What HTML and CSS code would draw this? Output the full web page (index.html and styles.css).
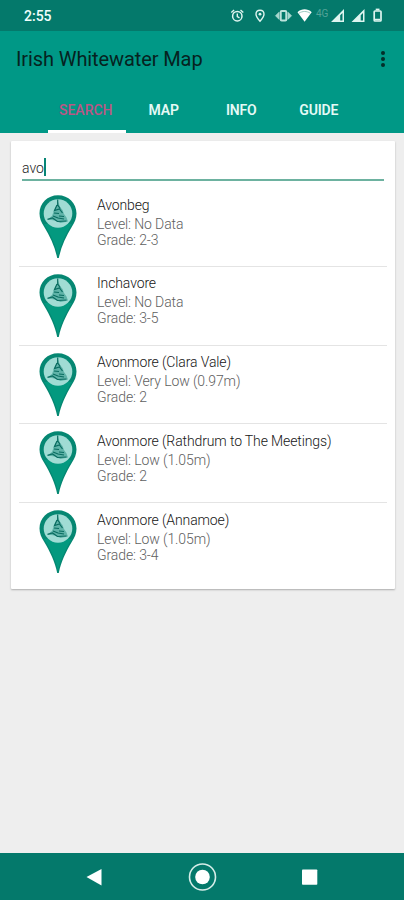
FILE: index.html
```
<!DOCTYPE html>
<html lang="en">
<head>
<meta charset="utf-8">
<title>Irish Whitewater Map</title>
<link rel="stylesheet" href="styles.css">
</head>
<body>
<svg class="defs" aria-hidden="true">
  <symbol id="pin" viewBox="0 0 38 64">
    <path d="M19 .3C8.500.3.5 8.300.5 18.600c0 5 2 9 4.500 13C11 41.500 16 52 18.200 63h1.600C22 52 27 41.500 33 31.600c2.500-4 4.500-8 4.500-13C37.500 8.300 29.500.3 19 .3z" fill="#058772"/>
    <path d="M5 29C12 40 17 51 19 61 21 51 26 40 33 29z" fill="#03997f"/>
    <circle cx="19" cy="18.500" r="14.300" fill="#a0dcd4"/>
    <path d="M18.500 5l-.5 5-2.500 4-2.500 7-4.500 3.500 7 1 6 2.500 7.500-1.500-1.500-4-2.500-3.500-1.500-4-2.500-3z" fill="#5fb3a8"/>
    <path d="M18.700 4.500v5.500l2.500 3.500M18 10l-2.500 5.500 5-1.500 3 4M15 18l5 .5M20 21l5 .5M8.500 24.300l5-1.300 5 3.500 9-.5M14 21l5 2 6 1" fill="none" stroke="#096c60" stroke-width="1.200"/>
  </symbol>
</svg>
<header>
  <div class="status">
    <span class="clock">2:55</span>
    <svg class="status-icons" width="170" height="31" viewBox="0 0 170 31" fill="none" stroke="#dff5f0">
      <circle cx="12.300" cy="16.200" r="4.700" stroke-width="1.500"/><path d="M12.300 13.500v3l2.200 1.300M6.300 12.500l2.800-2.500M15.500 10l2.800 2.500" stroke-width="1.400"/>
      <path d="M35 10.200c-2.400 0-4 1.700-4 4 0 2.700 4 7 4 7s4-4.300 4-7c0-2.300-1.600-4-4-4z" stroke-width="1.400"/><circle cx="35" cy="14.200" r="1.400" fill="#dff5f0" stroke="none"/>
      <rect x="55.700" y="11" width="5.600" height="9.500" rx="1" stroke="#bce3dc" stroke-width="2"/><path d="M54 12.300v7l-3.500-3.500zM63 12.300v7l3.500-3.500z" fill="#a8d8cf" stroke="#a8d8cf" stroke-width=".8"/>
      <path d="M72.500 12.200c4.200-3.800 10-3.800 14.200 0l-7.100 9.600z" fill="#fff" stroke="none"/><path d="M74 13.200c3.500-2.300 7.700-2.300 11.200 0" stroke="#84bdb3" stroke-width=".8"/>
      <text x="91" y="16.500" class="network">4G</text>
      <path d="M119 9v13h-13zM139.500 9v13h-13z" fill="#dff5f0" stroke="none"/><path d="M117.500 13v7.500h-2.300v-5.200zM138 13v7.500h-2.300v-5.200z" fill="#04796b" stroke="none"/>
      <rect x="149.200" y="11" width="6.800" height="10" rx=".8" stroke-width="1.700"/><path d="M150.700 9.500h3.800" stroke-width="1.800"/><path d="M150 19.500h5" stroke-width="1.500"/>
    </svg>
  </div>
  <div class="title-row">
    <h1>Irish Whitewater Map</h1>
    <svg width="6" height="18" viewBox="0 0 6 18" fill="#032e29"><circle cx="3" cy="3" r="2"/><circle cx="3" cy="9" r="2"/><circle cx="3" cy="15" r="2"/></svg>
  </div>
  <nav><a class="active">SEARCH</a><a>MAP</a><a>INFO</a><a>GUIDE</a></nav>
</header>
<main>
  <section class="card">
    <div class="search"><span>avo</span><i class="caret"></i></div>
    <ul>
      <li><svg class="pin"><use href="#pin"/></svg><div><h2>Avonbeg</h2><p>Level: No Data</p><p>Grade: 2-3</p></div></li>
      <li><svg class="pin"><use href="#pin"/></svg><div><h2>Inchavore</h2><p>Level: No Data</p><p>Grade: 3-5</p></div></li>
      <li><svg class="pin"><use href="#pin"/></svg><div><h2>Avonmore (Clara Vale)</h2><p>Level: Very Low (0.97m)</p><p>Grade: 2</p></div></li>
      <li><svg class="pin"><use href="#pin"/></svg><div><h2>Avonmore (Rathdrum to The Meetings)</h2><p>Level: Low (1.05m)</p><p>Grade: 2</p></div></li>
      <li><svg class="pin"><use href="#pin"/></svg><div><h2>Avonmore (Annamoe)</h2><p>Level: Low (1.05m)</p><p>Grade: 3-4</p></div></li>
    </ul>
  </section>
</main>
<footer>
  <svg width="404" height="47" viewBox="0 0 404 47" fill="#fff"><path d="M86.500 24L101.500 16v16.500z"/><circle cx="202.500" cy="24" r="7.300"/><circle cx="202.500" cy="24" r="13" fill="none" stroke="#d5ede8" stroke-width="1.600"/><rect x="302" y="16.500" width="15.300" height="15.300" rx=".8"/></svg>
</footer>
</body>
</html>
```
FILE: styles.css
```
* { box-sizing: border-box; margin: 0; padding: 0; }
body {
  height: 900px;
  display: flex;
  flex-direction: column;
  overflow: hidden;
  background: #eee;
  font-family: Roboto, "Liberation Sans", sans-serif;
}
.defs { position: absolute; width: 0; height: 0; }
header { height: 133px; background: #009886; }
.status {
  height: 31px;
  display: flex;
  justify-content: space-between;
  align-items: center;
  padding: 0 9px 0 24px;
  background: #04796b;
}
.clock { color: #f0fffc; font-size: 14px; font-weight: 500; line-height: 31px; padding-top: 1px; }
.network { fill: #53a398; stroke: none; font-size: 10px; }
.title-row {
  height: 56px;
  display: flex;
  justify-content: space-between;
  align-items: center;
  padding: 0 18px 0 16px;
}
h1 { color: #06231f; font-size: 20px; font-weight: 400; letter-spacing: -.1px; }
nav { height: 46px; display: flex; padding-left: 48px; }
nav a {
  width: 77.500px;
  height: 46px;
  color: #e4faf5;
  font-size: 14px;
  font-weight: 600;
  letter-spacing: -.15px;
  line-height: 47px;
  text-align: center;
  text-indent: -1px;
  border-bottom: 3px solid transparent;
}
nav .active { color: #ba5685; border-bottom-color: #fff; font-weight: 500; letter-spacing: 0; text-indent: -2px; }
main { flex: 1; padding: 8px 9.500px 0 11px; }
.card {
  height: 448px;
  background: #fff;
  border-radius: 1px;
  box-shadow: 0 1px 2px rgba(0, 0, 0, .28);
  padding: 14px 8px 0;
}
.search {
  height: 25.500px;
  display: flex;
  align-items: center;
  margin: 0 3px;
  border-bottom: 2px solid #6db2a0;
  color: #222;
  font-size: 14px;
  font-weight: 300;
}
.search span { padding-top: 2px; }
.caret { width: 2px; height: 18px; background: #078575; }
ul { list-style: none; padding-top: 7.500px; }
li {
  height: 78.800px;
  display: flex;
  align-items: flex-start;
  padding: 7px 0 0 20px;
  border-bottom: 1.500px solid #e4e4e4;
}
li:last-child { border: 0; }
li div { padding-top: .7px; }
.pin { width: 38px; height: 64px; margin-right: 20px; }
h2 { color: #161616; font-size: 14px; font-weight: 300; line-height: 19px; margin-bottom: 1px; letter-spacing: -.12px; }
p { color: #606060; font-size: 14px; font-weight: 300; line-height: 16px; letter-spacing: -.1px; }
footer { height: 47px; background: #04796b; }
```
